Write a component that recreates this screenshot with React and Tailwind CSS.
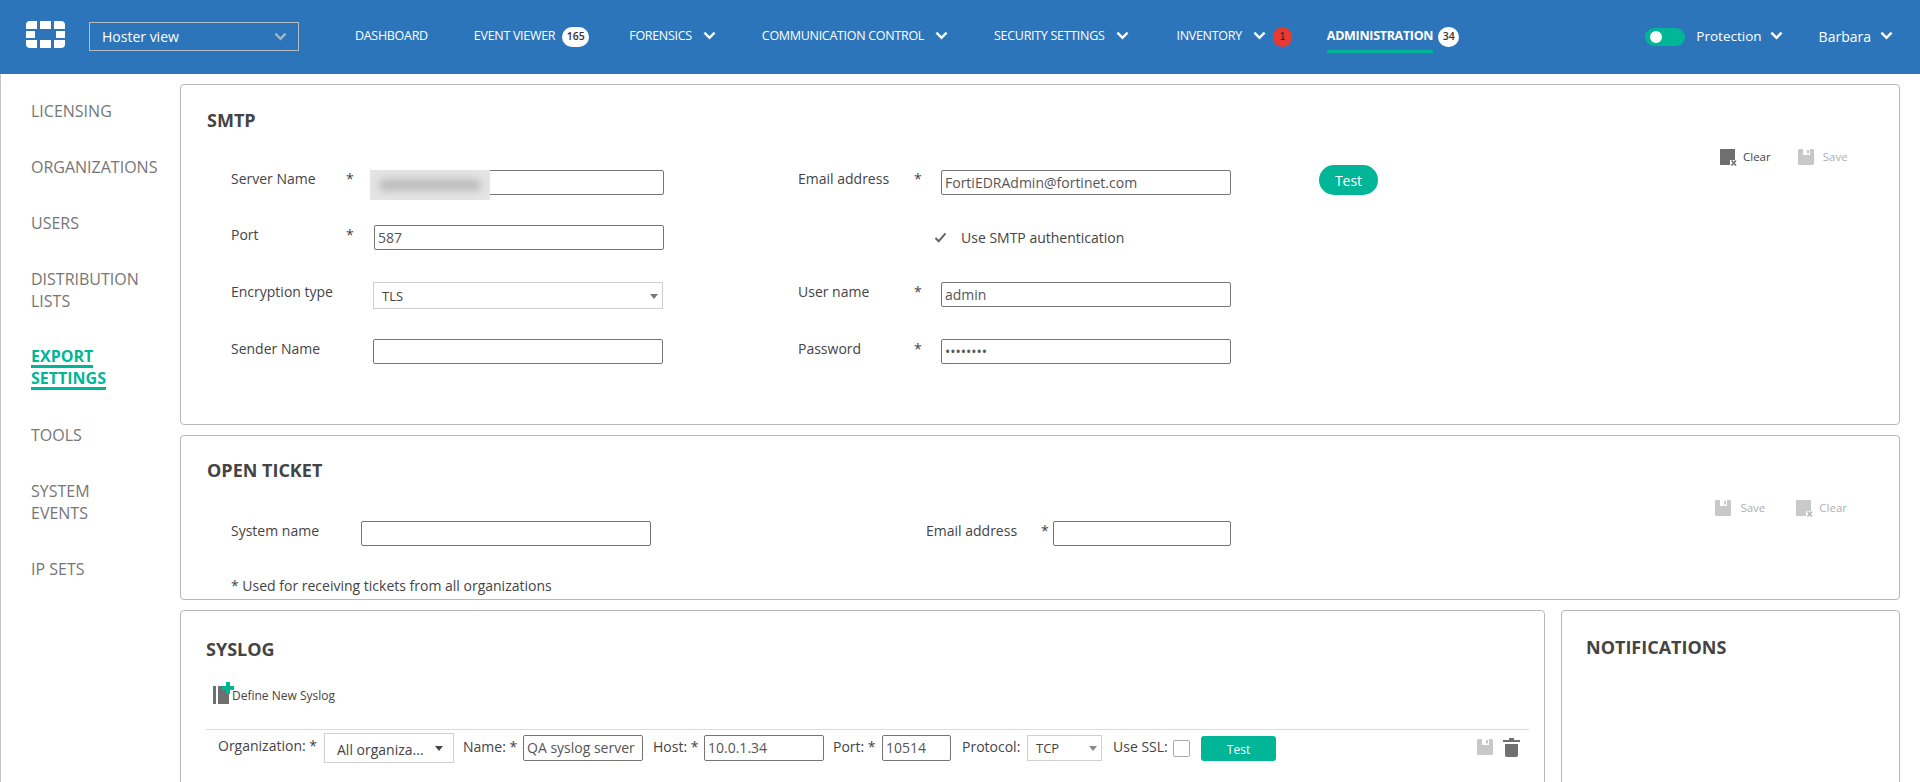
const font = { fontFamily: '"Open Sans", "Noto Sans", sans-serif' };

function Chevron({ className = "" }) {
  return (
    <svg viewBox="0 0 14 9" className={`w-[13px] h-[9px] ${className}`} fill="none" stroke="currentColor" strokeWidth="2.6">
      <path d="M1.500 1.500 7 7l5.500-5.500" />
    </svg>
  );
}

function Logo() {
  return (
    <svg viewBox="0 0 39 27" className="w-[39px] h-[27px] text-white" fill="currentColor">
      <path d="M0 8V4a4 4 0 0 1 4-4h7v8z" />
      <rect x="14" width="11" height="8" />
      <path d="M28 0h7a4 4 0 0 1 4 4v4H28z" />
      <rect y="10" width="9" height="7" />
      <rect x="30" y="10" width="9" height="7" />
      <path d="M0 19h11v8H4a4 4 0 0 1-4-4z" />
      <rect x="14" y="19" width="11" height="8" />
      <path d="M28 19h11v4a4 4 0 0 1-4 4h-7z" />
    </svg>
  );
}

function SaveIcon({ className = "" }) {
  return (
    <svg viewBox="0 0 16 16" className={`w-4 h-4 ${className}`} fill="currentColor">
      <path fillRule="evenodd" d="M1.500 0h13A1.500 1.500 0 0 1 16 1.500V14.500A1.500 1.500 0 0 1 14.500 16H1.500A1.500 1.500 0 0 1 0 14.500V1.500A1.500 1.500 0 0 1 1.500 0ZM5 0v6h7V0ZM9 1v3.500h2V1Z" />
    </svg>
  );
}

function ClearIcon({ className = "", mark = "#6f6f6f" }) {
  return (
    <svg viewBox="0 0 17 17" className={`w-[17px] h-[17px] ${className}`}>
      <path fill="currentColor" d="M0 0h15v11h-4v5H0z" />
      <path fill="#fff" d="M10 11h7v6h-7z" />
      <path stroke={mark} strokeWidth="1.600" fill="none" d="M11.500 11.500l4.500 5M16 11.500l-4.500 5" />
    </svg>
  );
}

function Action({ icon, label, className = "" }) {
  return (
    <div className={`flex items-center gap-[6px] text-[11.500px] ${className}`}>
      {icon}
      <span>{label}</span>
    </div>
  );
}

function NavItem({ label, chevron, children, active }) {
  return (
    <div className={`relative h-full flex items-center text-[12.500px] tracking-[-0.3px] text-white ${active ? "font-bold" : ""}`}>
      <span className={active ? "relative" : ""}>
        {label}
        {active && <span className="absolute left-0 right-0 top-[23px] h-[3px] bg-[#00b697]" />}
      </span>
      {chevron && <Chevron className="ml-[11px] -mt-[3px]" />}
      {children}
    </div>
  );
}

function Badge({ children, className = "" }) {
  return (
    <span className={`flex items-center justify-center h-5 rounded-full bg-white text-[10.500px] tracking-normal font-semibold text-[#333] ${className}`}>
      {children}
    </span>
  );
}

function Input({ value = "", className = "" }) {
  return (
    <div className={`h-[25px] box-border border border-[#757575] rounded-[2px] bg-white text-[14px] leading-[23px] text-[#555] px-[3px] overflow-hidden whitespace-nowrap ${className}`}>
      {value}
    </div>
  );
}

function Row({ label, star, labelW, children, first, className = "" }) {
  const nudge = first ? "-mt-[1px]" : "mt-0";
  return (
    <div className={`flex items-start text-[14px] text-[#444] ${className}`}>
      <span className={`${labelW} ${nudge} leading-[20px]`}>{label}</span>
      <span className={`w-[28px] ${nudge} leading-[20px]`}>{star ? "*" : ""}</span>
      {children}
    </div>
  );
}

function Card({ className = "", children }) {
  return (
    <section className={`box-border shrink-0 border border-[#b8b8b8] rounded-[4px] bg-white ${className}`}>{children}</section>
  );
}

function Title({ children, className = "" }) {
  return <h2 className={`text-[18px] font-bold leading-[24px] text-[#444] ${className}`}>{children}</h2>;
}

const sideItems = [
  ["LICENSING"],
  ["ORGANIZATIONS"],
  ["USERS"],
  ["DISTRIBUTION", "LISTS"],
  ["EXPORT", "SETTINGS"],
  ["TOOLS"],
  ["SYSTEM", "EVENTS"],
  ["IP SETS"],
];

function Sidebar() {
  return (
    <aside className="w-[180px] shrink-0 border-l border-l-[#c4c4c4] box-border pl-[30px] pt-[26px] flex flex-col gap-[34px]">
      {sideItems.map((lines) => {
        const active = lines[0] === "EXPORT";
        return (
          <div key={lines[0]} className={`text-[16px] leading-[22px] ${active ? "font-bold text-[#00b697]" : "text-[#767676]"}`}>
            {lines.map((l) => (
              <div key={l} className="h-[22px] flex items-start">
                <span className={active ? "border-b-[3px] border-[#00b697] block leading-[21px] h-[22px] box-border" : ""}>{l}</span>
              </div>
            ))}
          </div>
        );
      })}
    </aside>
  );
}

function Header() {
  return (
    <header className="h-[74px] bg-[#2c75ba] flex items-start shrink-0">
      <div className="ml-[26px] mt-[21px]"><Logo /></div>
      <div className="ml-[24px] mt-[22px] w-[210px] h-[29px] box-border border border-[#b4bcc4] flex items-center justify-between pl-[12px] pr-[11px] text-[14px] text-white">
        <span>Hoster view</span>
        <Chevron className="text-[#a9b4bf]" />
      </div>
      <nav className="ml-[56px] h-[74px] flex items-center pb-[1px]">
        <NavItem label="DASHBOARD" />
        <div className="w-[46px]" />
        <NavItem label="EVENT VIEWER"><Badge className="ml-[7px] w-[27px]">165</Badge></NavItem>
        <div className="w-[40px]" />
        <NavItem label="FORENSICS" chevron />
        <div className="w-[46px]" />
        <NavItem label="COMMUNICATION CONTROL" chevron />
        <div className="w-[46px]" />
        <NavItem label="SECURITY SETTINGS" chevron />
        <div className="w-[48px]" />
        <NavItem label="INVENTORY" chevron>
          <span className="ml-[7px] flex items-center justify-center w-[19px] h-5 rounded-full bg-[#e63a33] text-[10px] text-[#222]" style={{ fontFamily: '"Liberation Sans", sans-serif' }}>1</span>
        </NavItem>
        <div className="w-[35px]" />
        <NavItem label="ADMINISTRATION" active><Badge className="ml-[5px] w-[21px]">34</Badge></NavItem>
      </nav>
      <div className="ml-auto mr-[27px] h-[74px] flex items-center text-[14px] text-white pb-[1px]">
        <div className="w-10 h-[18px] rounded-full bg-[#00b697] flex items-center pl-[5px]">
          <span className="w-[12px] h-[12px] rounded-full bg-white" />
        </div>
        <span className="ml-[11px] text-[13.500px]">Protection</span>
        <Chevron className="ml-[8px] -mt-[2px]" />
        <span className="ml-[36px]">Barbara</span>
        <Chevron className="ml-[9px] -mt-[3px]" />
      </div>
    </header>
  );
}

function Smtp() {
  return (
    <Card className="h-[341px] pl-[26px] pt-[23px] flex flex-col">
      <Title>SMTP</Title>
      <div className="flex mt-[38px]">
        <div className="ml-[24px] w-[567px] flex flex-col">
          <Row first label="Server Name" star labelW="w-[115px]" className="h-[55px]">
            <div className="relative">
              <Input className="w-[290px]" />
              <div className="absolute left-[-4px] top-0 w-[120px] h-[30px] bg-[#e4e4e4] overflow-hidden">
                <div className="mx-[10px] mt-[10px] h-[10px] bg-[#b5b5b5] blur-[4px]" />
              </div>
            </div>
          </Row>
          <Row label="Port" star labelW="w-[115px]" className="h-[57px]">
            <Input value="587" className="w-[290px]" />
          </Row>
          <Row label="Encryption type" labelW="w-[115px]" className="h-[57px]">
            <div className="-ml-px w-[290px] h-[27px] box-border border border-[#cfcfcf] flex items-center justify-between pl-[8px] pr-[4px] text-[13px] text-[#444]">
              <span className="pt-[3px]">TLS</span>
              <span className="w-0 h-0 border-x-[4px] border-x-transparent border-t-[5px] border-t-[#777] mt-[2px]" />
            </div>
          </Row>
          <Row label="Sender Name" labelW="w-[115px]">
            <Input className="-ml-px w-[290px]" />
          </Row>
        </div>
        <div className="w-[433px] flex flex-col">
          <Row first label="Email address" star labelW="w-[116px]" className="h-[55px]">
            <Input value="FortiEDRAdmin@fortinet.com" className="w-[290px] -ml-[1px]" />
          </Row>
          <div className="h-[57px] flex items-start ml-[136px] text-[14px] text-[#444]">
            <svg viewBox="0 0 14 12" className="w-[13px] h-[11px] mt-[7px] text-[#666]" fill="none" stroke="currentColor" strokeWidth="2.200"><path d="M1.500 6.500 5 10l7.500-8.500" /></svg>
            <span className="ml-[14px] mt-[3px] leading-[20px]">Use SMTP authentication</span>
          </div>
          <Row label="User name" star labelW="w-[116px]" className="h-[57px]">
            <Input value="admin" className="w-[290px] -ml-[1px]" />
          </Row>
          <Row label="Password" star labelW="w-[116px]">
            <Input value="••••••••" className="w-[290px] -ml-[1px] text-[11px]" />
          </Row>
        </div>
        <div className="ml-[88px] -mt-[5px] h-[30px] w-[59px] rounded-full bg-[#00b697] text-white text-[14px] flex items-center justify-center">Test</div>
        <div className="ml-[342px] -mt-[22px] flex items-center h-[18px] text-[#444]">
          <Action icon={<ClearIcon className="text-[#6f6f6f]" />} label="Clear" />
          <Action icon={<SaveIcon className="text-[#c8c8c8]" />} label="Save" className="ml-[27px] gap-[9px] text-[#b0b0b0]" />
        </div>
      </div>
    </Card>
  );
}

function OpenTicket() {
  return (
    <Card className="h-[165px] pl-[26px] pt-[22px]">
      <div className="flex">
        <Title>OPEN TICKET</Title>
        <div className="ml-auto mr-[52px] mt-[41px] -mb-[2px] flex items-center h-[18px] text-[#b0b0b0]">
          <Action icon={<SaveIcon className="text-[#c8c8c8]" />} label="Save" className="gap-[9px]" />
          <Action icon={<ClearIcon className="text-[#cacaca]" mark="#b5b5b5" />} label="Clear" className="ml-[31px] gap-[5px]" />
        </div>
      </div>
      <div className="flex ml-[24px] mt-[6px] text-[14px] text-[#444]">
        <span className="w-[130px] leading-[20px]">System name</span>
        <Input className="w-[290px]" />
        <span className="ml-[275px] w-[115px] leading-[20px]">Email address</span>
        <span className="w-[12px] leading-[20px]">*</span>
        <Input className="w-[178px]" />
      </div>
      <p className="ml-[24px] mt-[30px] text-[14px] leading-[20px] text-[#444]">* Used for receiving tickets from all organizations</p>
    </Card>
  );
}

function Syslog() {
  return (
    <Card className="w-[1365px] h-[200px] pt-[26px]">
      <Title className="ml-[25px]">SYSLOG</Title>
      <div className="ml-[32px] mt-[21px] h-[25px] flex items-start">
        <svg viewBox="0 0 21 22" className="w-[21px] h-[22px]">
          <path fill="#6f6f6f" d="M0 4h3v18H0zM5 4h5v4h6v14H5z" />
          <path fill="#00b697" d="M13 0h4v4h4v4h-4v4h-4V8H9V4h4z" />
        </svg>
        <span className="-ml-[2px] mt-[6px] text-[12px] leading-[16px] text-[#444]">Define New Syslog</span>
      </div>
      <div className="ml-[25px] mr-[15px] mt-[22px] border-t border-[#dcdcdc] flex items-start pt-[3px] pl-[12px] text-[14px] text-[#444]">
        <span className="w-[106px] mt-[3px] leading-[20px]">Organization: *</span>
        <div className="w-[130px] h-[30px] box-border border border-[#d0d0d0] flex items-center justify-between pl-[12px] pr-[10px]">
          <span className="pt-[2px]">All organiza...</span>
          <span className="w-0 h-0 border-x-[4px] border-x-transparent border-t-[5px] border-t-[#444]" />
        </div>
        <span className="w-[60px] ml-[9px] mt-[4px] leading-[20px]">Name: *</span>
        <Input value="QA syslog server" className="w-[120px] h-[26px] mt-[2px]" />
        <span className="w-[51px] ml-[10px] mt-[4px] leading-[20px]">Host: *</span>
        <Input value="10.0.1.34" className="w-[120px] h-[26px] mt-[2px]" />
        <span className="w-[49px] ml-[9px] mt-[4px] leading-[20px]">Port: *</span>
        <Input value="10514" className="w-[69px] h-[26px] mt-[2px]" />
        <span className="w-[65px] ml-[11px] mt-[4px] leading-[20px]">Protocol:</span>
        <div className="w-[75px] h-[26px] mt-[2px] box-border border border-[#d0d0d0] flex items-center justify-between pl-[8px] pr-[4px] text-[13px]">
          <span className="pt-[2px]">TCP</span>
          <span className="w-0 h-0 border-x-[4px] border-x-transparent border-t-[5px] border-t-[#888]" />
        </div>
        <span className="w-[60px] ml-[11px] mt-[4px] leading-[20px]">Use SSL:</span>
        <span className="w-[17px] h-[17px] mt-[7px] box-border border border-[#aaa] rounded-[2px]" />
        <div className="ml-[11px] mt-[3px] w-[75px] h-[25px] rounded-[3px] bg-[#00b697] text-white text-[12px] flex items-center justify-center pt-[2px]">Test</div>
        <SaveIcon className="ml-auto mt-[6px] text-[#c8c8c8]" />
        <svg viewBox="0 0 17 19" className="w-[17px] h-[19px] ml-[10px] mr-[9px] mt-[5px] text-[#707070]" fill="currentColor">
          <path d="M6 0h5v2h6v2H0V2h6zM2 6h13v11a2 2 0 0 1-2 2H4a2 2 0 0 1-2-2z" />
        </svg>
      </div>
    </Card>
  );
}

export default function App() {
  return (
    <div className="h-[782px] overflow-hidden flex flex-col bg-white" style={font}>
      <Header />
      <div className="flex flex-1 min-h-0">
        <Sidebar />
        <main className="w-[1720px] pt-[10px] flex flex-col gap-[10px]">
          <Smtp />
          <OpenTicket />
          <div className="flex gap-[16px] shrink-0">
            <Syslog />
            <Card className="flex-1 h-[200px] pl-[24px] pt-[24px]">
              <Title>NOTIFICATIONS</Title>
            </Card>
          </div>
        </main>
      </div>
    </div>
  );
}
